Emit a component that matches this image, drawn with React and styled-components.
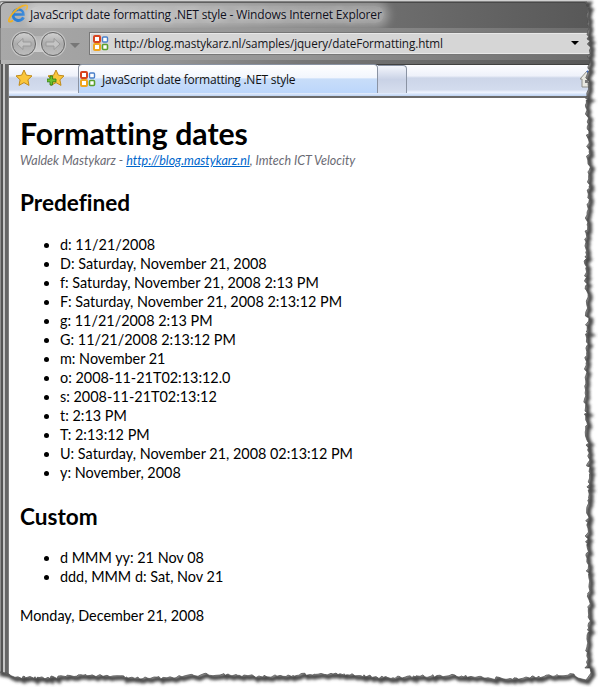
import React from 'react'
import styled, { createGlobalStyle } from 'styled-components'

const predefined = [
  'd: 11/21/2008',
  'D: Saturday, November 21, 2008',
  'f: Saturday, November 21, 2008 2:13 PM',
  'F: Saturday, November 21, 2008 2:13:12 PM',
  'g: 11/21/2008 2:13 PM',
  'G: 11/21/2008 2:13:12 PM',
  'm: November 21',
  'o: 2008-11-21T02:13:12.0',
  's: 2008-11-21T02:13:12',
  't: 2:13 PM',
  'T: 2:13:12 PM',
  'U: Saturday, November 21, 2008 02:13:12 PM',
  'y: November, 2008',
]

const custom = ['d MMM yy: 21 Nov 08', 'ddd, MMM d: Sat, Nov 21']

// jagged outline of the torn screenshot edge, seeded so it stays the same
function tornPath() {
  let seed = 11
  const rnd = () => {
    seed = (seed * 16807) % 2147483647
    return seed / 2147483647
  }
  const pts = ['M0 2', 'L587 2']
  for (let y = 5; y < 670; y += 1 + Math.floor(rnd() * 4)) {
    const x = 587 + (rnd() - 0.5) * 3.5 + Math.sin(y / 23) * 1.2 + Math.sin(y / 71) * 1
    pts.push(`L${x.toFixed(1)} ${y}`)
  }
  pts.push('L590 668', 'L591 673', 'L586 680', 'L578 678')
  for (let x = 575; x > 10; x -= 1 + Math.floor(rnd() * 4)) {
    const y = 676 + (rnd() - 0.5) * 3 + Math.sin(x / 19) * 1.3 + Math.sin(x / 61) * 1
    pts.push(`L${x} ${y.toFixed(1)}`)
  }
  pts.push('L9 674', 'L6 673', 'L0 672', 'Z')
  return pts.join(' ')
}

const GlobalStyle = createGlobalStyle`
  html, body {
    margin: 0;
    padding: 0;
    background: #fff;
  }
`

const Page = styled.div`
  position: relative;
  width: 598px;
  height: 687px;
  overflow: hidden;
  background: #fff;
`

const Window = styled.div`
  width: 590px;
  height: 685px;
  margin-top: 2px;
  display: flex;
  flex-direction: column;
  box-sizing: border-box;
  border-radius: 6px 6px 0 0;
  background: linear-gradient(90deg, #b4b4b4 0, #a4a4a4 90px, #777 300px, #585858 100%);
  box-shadow: inset 0 1px 0 #4d4d4d, inset 1px 0 0 #6a6a6a;
`

const TitleBar = styled.div`
  height: 26px;
  display: flex;
  align-items: center;
  padding: 0 0 2px 8px;
  gap: 2px;
  box-sizing: border-box;
  flex: none;
`

const TitleText = styled.span`
  font: 12px "Open Sans", sans-serif;
  color: #10101c;
  letter-spacing: -0.16px;
  padding: 0 2px 0 0;
  border-radius: 8px;
  background: rgba(255, 255, 255, 0.32);
  box-shadow: 0 0 8px 5px rgba(255, 255, 255, 0.32);
  text-shadow: 0 0 6px rgba(255, 255, 255, 0.9);
`

const NavBar = styled.div`
  height: 32px;
  flex: none;
  display: flex;
  align-items: center;
  padding-left: 12px;
  background: linear-gradient(90deg, #a8a8a8 0, #949494 300px, #6c6c6c 100%);
`

const NavPill = styled.div`
  display: flex;
  gap: 5px;
  border-radius: 13px;
  background: linear-gradient(180deg, transparent 15%, #b5b5b5 15%, #cfcfcf 85%, transparent 85%);
`

const NavCircle = styled.div`
  width: 24px;
  height: 24px;
  border-radius: 50%;
  display: flex;
  align-items: center;
  justify-content: center;
  box-sizing: border-box;
  border: 1px solid #666;
  background: linear-gradient(180deg, #d0d0d0, #ababab 50%, #bdbdbd);
  box-shadow: 0 0 0 1px rgba(215, 215, 215, 0.7);
`

const DropTriangle = styled.div`
  width: 0;
  height: 0;
  margin: 2px 9px 0 5px;
  border-left: 5px solid transparent;
  border-right: 5px solid transparent;
  border-top: 5px solid #777;
`

const AddressBar = styled.div`
  flex: 1;
  height: 23px;
  display: flex;
  align-items: center;
  gap: 5px;
  padding: 0 0 0 3px;
  margin-top: -2px;
  box-sizing: border-box;
  border: 1px solid #777;
  border-right: none;
  background: #d6d6d6;
  box-shadow: inset 0 0 0 1px #e8e8e8;
`

const UrlText = styled.span`
  flex: 1;
  font: 11.7px "Open Sans", sans-serif;
  color: #15151a;
  letter-spacing: -0.1px;
`

const ArrowCell = styled.div`
  width: 24px;
  height: 100%;
  display: flex;
  align-items: center;
  padding-left: 5px;
  box-sizing: border-box;
  &::before {
    content: "";
    border-left: 4px solid transparent;
    border-right: 4px solid transparent;
    border-top: 4px solid #000;
  }
`

const Body = styled.div`
  flex: 1;
  display: flex;
  flex-direction: column;
  min-height: 0;
  margin: 4px 0 0 8px;
  background: #fff;
  border-top: 1px solid #404040;
  border-left: 1px solid #808080;
  box-shadow: -3px 0 0 #666, -5px 0 0 #c6c6c6, -7px 0 0 #555, -8px 0 0 #bbb;
`

const TabStrip = styled.div`
  height: 33px;
  flex: none;
  display: flex;
  align-items: flex-end;
  padding: 0 0 3px 0;
  box-sizing: border-box;
  border-bottom: 2px solid #6b6b6b;
  background: linear-gradient(180deg, #fdfdff 0, #eef1fa 35%, #ccd5e8 42%, #d3dcee 80%, #f0f5ff 88%, #bcd2f2 100%);
`

const FavArea = styled.div`
  width: 69px;
  height: 30px;
  display: flex;
  align-items: center;
  padding-left: 6px;
  gap: 14px;
  box-sizing: border-box;
  flex: none;
`

const Tab = styled.div`
  width: 300px;
  height: 29px;
  flex: none;
  display: flex;
  align-items: center;
  gap: 6px;
  padding-left: 1px;
  box-sizing: border-box;
  border: 1px solid #8a93a3;
  border-bottom: none;
  border-radius: 4px 4px 0 0;
  background: linear-gradient(180deg, #fff 0, #f2f6fd 45%, #c8ddf9 50%, #bcd6fb 100%);
`

const TabTitle = styled.span`
  font: 12px "Open Sans", sans-serif;
  color: #111;
  letter-spacing: -0.25px;
`

const NewTab = styled.div`
  width: 29px;
  height: 28px;
  flex: none;
  box-sizing: border-box;
  border: 1px solid #8a93a3;
  border-bottom: none;
  border-left: none;
  border-radius: 0 4px 0 0;
  background: linear-gradient(180deg, #f4f6fc, #c9d2e6 50%, #d6deee);
`

const HomeSlot = styled.div`
  flex: 1;
  display: flex;
  justify-content: flex-end;
  align-items: center;
  height: 28px;
  margin-right: -4px;
`

const Content = styled.main`
  flex: 1;
  padding: 19px 11px 0 11px;
  font-family: Lato, sans-serif;
  font-variant-ligatures: none;
  color: #000;
`

const Title = styled.h1`
  margin: 0;
  font-size: 30.2px;
  line-height: 33px;
  font-weight: 700;
`

const Byline = styled.div`
  margin-top: 3px;
  font-size: 12.5px;
  line-height: 16px;
  font-style: italic;
  color: #6b6b74;
  a {
    color: #0066cc;
    text-decoration: underline;
  }
`

const Heading = styled.h2`
  margin: 19px 0 0;
  font-size: 22.6px;
  line-height: 30px;
  font-weight: 700;
`

const List = styled.ul`
  margin: 16.5px 0 0;
  padding: 0 0 0 40px;
  font-size: 14.4px;
  line-height: 19.08px;
`

const Footer = styled.p`
  margin: 20px 0 0;
  font-size: 14.4px;
  line-height: 19px;
`

const TornOverlay = styled.svg`
  position: absolute;
  inset: 0;
  pointer-events: none;
`

function IeLogo() {
  return (
    <svg width="20" height="20" viewBox="0 0 20 20">
      <path d="M10.500 5.500a5.500 5.500 0 1 0 5 7.800" fill="none" stroke="#2a7fd6" strokeWidth="3" />
      <path d="M6 10.500h9.500c0-3-2-5-5-5" fill="none" stroke="#2a7fd6" strokeWidth="2.400" />
      <path d="M5 16.500C2.500 18 1 18 .8 17 .4 15.300 3.500 10 8 6 12.500 2 17.500.5 19 1.600c1 .8.300 2.600-1 4.400" fill="none" stroke="#f2b01e" strokeWidth="1.700" />
    </svg>
  )
}

function PageIcon() {
  return (
    <svg width="16" height="16" viewBox="0 0 16 16" style={{ flex: 'none' }}>
      <rect x="1" y="1" width="6" height="6" rx="1" fill="#fff" stroke="#d8431f" strokeWidth="2" />
      <rect x="9.500" y="2" width="5" height="5" rx="1" fill="#fff" stroke="#4a7fc9" strokeWidth="1.400" />
      <rect x="1" y="9" width="6" height="6" rx="1" fill="#fff" stroke="#f0a51e" strokeWidth="2" />
      <rect x="9.500" y="9.500" width="5" height="5" rx="1" fill="#fff" stroke="#5aa02c" strokeWidth="1.600" />
    </svg>
  )
}

function StarIcon({ plus }) {
  return (
    <svg width="18" height="18" viewBox="0 0 18 18">
      <path d="M9 1l2.400 5.200 5.600.7-4.100 3.900 1.100 5.600L9 13.600l-5 2.800 1.100-5.600L1 6.900l5.600-.7z" fill="#fbc63a" stroke="#c08a1a" strokeWidth="1" strokeLinejoin="round" />
      {plus && <path d="M3 7h2.600v3H9v2.800H5.600V16H3v-3.200H0V10h3z" fill="#6dc22d" stroke="#2d7a12" strokeWidth="0.800" />}
    </svg>
  )
}

function HomeIcon() {
  return (
    <svg width="14" height="18" viewBox="0 0 14 18">
      <path d="M0 9L7 1l7 6v3H12v7H2V9z" fill="#e8e8e2" stroke="#8f8f8a" />
      <path d="M7 1l7 6" stroke="#3a69c4" strokeWidth="2" fill="none" />
      <rect x="5" y="10" width="3" height="3" fill="#777" />
    </svg>
  )
}

function ArrowIcon({ flip }) {
  return (
    <svg width="16" height="14" viewBox="0 0 16 14" style={{ transform: flip ? 'scaleX(-1)' : 'none' }}>
      <path d="M1 7l6-5.500v3.500h8v4H7v3.500z" fill="#c4c4c4" stroke="#9a9a9a" />
    </svg>
  )
}

export default function App() {
  const torn = tornPath()
  const outside = `M0 0H598V687H0Z ${torn}`
  return (
    <Page>
      <GlobalStyle />
      <Window>
        <TitleBar>
          <IeLogo />
          <TitleText>JavaScript date formatting .NET style - Windows Internet Explorer</TitleText>
        </TitleBar>
        <NavBar>
          <NavPill>
            <NavCircle><ArrowIcon /></NavCircle>
            <NavCircle><ArrowIcon flip /></NavCircle>
          </NavPill>
          <DropTriangle />
          <AddressBar>
            <PageIcon />
            <UrlText>http://blog.mastykarz.nl/samples/jquery/dateFormatting.html</UrlText>
            <ArrowCell />
          </AddressBar>
        </NavBar>
        <Body>
          <TabStrip>
            <FavArea>
              <StarIcon />
              <StarIcon plus />
            </FavArea>
            <Tab>
              <PageIcon />
              <TabTitle>JavaScript date formatting .NET style</TabTitle>
            </Tab>
            <NewTab />
            <HomeSlot><HomeIcon /></HomeSlot>
          </TabStrip>
          <Content>
            <Title>Formatting dates</Title>
            <Byline>
              Waldek Mastykarz - <a href="#blog">http://blog.mastykarz.nl</a>, Imtech ICT Velocity
            </Byline>
            <Heading>Predefined</Heading>
            <List>
              {predefined.map((item) => <li key={item}>{item}</li>)}
            </List>
            <Heading>Custom</Heading>
            <List>
              {custom.map((item) => <li key={item}>{item}</li>)}
            </List>
            <Footer>Monday, December 21, 2008</Footer>
          </Content>
        </Body>
      </Window>
      <TornOverlay width="598" height="687" viewBox="0 0 598 687">
        <defs>
          <filter id="tornBlur" x="-5%" y="-5%" width="110%" height="110%">
            <feGaussianBlur stdDeviation="1.6" />
          </filter>
          <clipPath id="tornOutside">
            <path d={outside} clipRule="evenodd" />
          </clipPath>
        </defs>
        <path d={outside} fill="#fff" fillRule="evenodd" />
        <g clipPath="url(#tornOutside)">
          <path d={torn} transform="translate(2 2)" fill="none" stroke="#4a4a4a" strokeWidth="5" filter="url(#tornBlur)" />
        </g>
        <path d={torn} fill="none" stroke="#444" strokeWidth="0.700" />
      </TornOverlay>
    </Page>
  )
}
